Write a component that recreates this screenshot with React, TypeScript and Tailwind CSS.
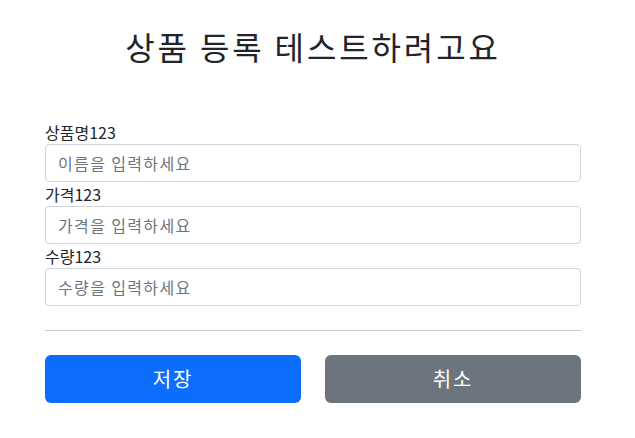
const fields = [
  { label: "상품명123", placeholder: "이름을 입력하세요" },
  { label: "가격123", placeholder: "가격을 입력하세요" },
  { label: "수량123", placeholder: "수량을 입력하세요" },
];

export default function App() {
  return (
    <div
      className="min-h-[438px] bg-white text-[#212529]"
      style={{ fontFamily: '"Noto Sans CJK KR", "Noto Sans", sans-serif' }}
    >
      <div className="ml-[45px] w-[536px]">
        {/* Title */}
        <div className="pt-[27px] text-center">
          <h2 className="text-[32px] leading-[38px] font-normal tracking-[0.09em]">상품 등록 테스트하려고요</h2>
        </div>

        {/* Form */}
        <form className="mt-[55px]">
          {fields.map((f) => (
            <div key={f.label}>
              <label className="block text-[16px] leading-[24px]">{f.label}</label>
              <input
                type="text"
                placeholder={f.placeholder}
                className="block w-full h-[38px] px-3 text-[16px] tracking-[0.085em] border border-[#ced4da] rounded-[4px] outline-none placeholder:text-[#6c757d]"
              />
            </div>
          ))}

          <hr className="my-[24px] border-0 border-t border-[#c8c9ca]" />

          <div className="flex gap-[24px]">
            <button
              type="button"
              className="flex-1 h-[48px] rounded-[6px] bg-[#0d6efd] text-white text-[20px] tracking-[0.09em]"
            >
              저장
            </button>
            <button
              type="button"
              className="flex-1 h-[48px] rounded-[6px] bg-[#6c757d] text-white text-[20px] tracking-[0.09em]"
            >
              취소
            </button>
          </div>
        </form>
      </div>
    </div>
  );
}
